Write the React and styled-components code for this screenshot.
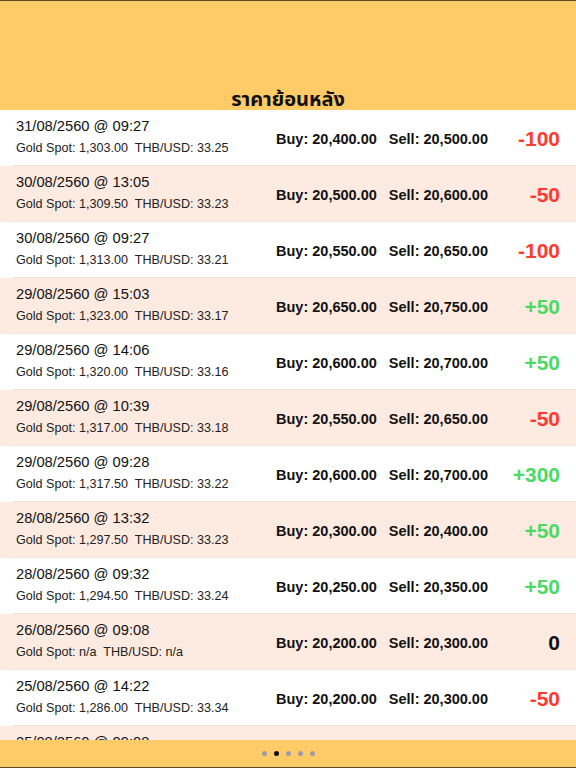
import React from 'react'
import styled, { createGlobalStyle } from 'styled-components'

const GlobalStyle = createGlobalStyle`
    html, body {
        margin: 0;
        padding: 0;
        background: #ffffff;
    }
    body {
        font-family: "Liberation Sans", Arial, sans-serif;
    }
`

const Screen = styled.div`
    width: 576px;
    height: 768px;
    display: flex;
    flex-direction: column;
    overflow: hidden;
    background: #ffffff;
`

const Header = styled.div`
    height: 109px;
    flex-shrink: 0;
    border-top: 1px solid #5b4a2c;
    background: #fecb66;
    display: flex;
    align-items: flex-end;
    justify-content: center;
`

const Title = styled.h1`
    margin: 0 0 -3px;
    font-family: "Noto Sans Thai", "Noto Sans", "DejaVu Sans", sans-serif;
    font-size: 20px;
    font-weight: bold;
    color: #111111;
    line-height: 26px;
`

const List = styled.div`
    flex: 1;
    overflow: hidden;
`

const Row = styled.div`
    position: relative;
    height: 56px;
    box-sizing: border-box;
    padding: 0 16px;
    display: grid;
    grid-template-columns: 1fr auto 72px;
    align-items: center;
    background: ${p => (p.$alt ? '#fdeae1' : '#ffffff')};

    &::after {
        content: '';
        position: absolute;
        left: 12px;
        right: 0;
        bottom: 0;
        height: 1px;
        background: #e8e4e2;
    }
`

const Info = styled.div`
    display: flex;
    flex-direction: column;
    gap: 5px;
    margin-top: -2px;
`

const Stamp = styled.div`
    font-size: 14.7px;
    color: #111111;
    line-height: 18px;
`

const Spot = styled.div`
    font-size: 12.6px;
    color: #222222;
    line-height: 17px;
    white-space: pre;
`

const Prices = styled.div`
    font-size: 14.5px;
    font-weight: bold;
    color: #111111;
    white-space: pre;
    margin-top: 2px;
`

const Change = styled.div`
    text-align: right;
    font-size: 21px;
    font-weight: bold;
    margin-top: 1px;
    color: ${p => (p.$value > 0 ? '#4cd964' : p.$value < 0 ? '#ff3b30' : '#111111')};
`

const Footer = styled.div`
    height: 27px;
    flex-shrink: 0;
    border-bottom: 1px solid #5b4a2c;
    background: #fecb66;
    display: flex;
    align-items: center;
    justify-content: center;
    gap: 7px;
`

const Dot = styled.span`
    width: 5px;
    height: 5px;
    border-radius: 50%;
    background: ${p => (p.$active ? '#111111' : '#9c9ca4')};
`

const history = [
    ['31/08/2560 @ 09:27', '1,303.00', '33.25', '20,400.00', '20,500.00', -100],
    ['30/08/2560 @ 13:05', '1,309.50', '33.23', '20,500.00', '20,600.00', -50],
    ['30/08/2560 @ 09:27', '1,313.00', '33.21', '20,550.00', '20,650.00', -100],
    ['29/08/2560 @ 15:03', '1,323.00', '33.17', '20,650.00', '20,750.00', 50],
    ['29/08/2560 @ 14:06', '1,320.00', '33.16', '20,600.00', '20,700.00', 50],
    ['29/08/2560 @ 10:39', '1,317.00', '33.18', '20,550.00', '20,650.00', -50],
    ['29/08/2560 @ 09:28', '1,317.50', '33.22', '20,600.00', '20,700.00', 300],
    ['28/08/2560 @ 13:32', '1,297.50', '33.23', '20,300.00', '20,400.00', 50],
    ['28/08/2560 @ 09:32', '1,294.50', '33.24', '20,250.00', '20,350.00', 50],
    ['26/08/2560 @ 09:08', 'n/a', 'n/a', '20,200.00', '20,300.00', 0],
    ['25/08/2560 @ 14:22', '1,286.00', '33.34', '20,200.00', '20,300.00', -50],
    ['25/08/2560 @ 09:08', '1,290.00', '33.35', '20,250.00', '20,350.00', 50],
]

const formatChange = v => (v > 0 ? '+' + v : String(v))

export default function App() {
    return (
        <React.Fragment>
            <GlobalStyle />
            <Screen>
                <Header>
                    <Title>ราคาย้อนหลัง</Title>
                </Header>
                <List>
                    {history.map(([stamp, spot, rate, buy, sell, change], i) => (
                        <Row key={stamp + i} $alt={i % 2 === 1}>
                            <Info>
                                <Stamp>{stamp}</Stamp>
                                <Spot>{'Gold Spot: ' + spot + '  THB/USD: ' + rate}</Spot>
                            </Info>
                            <Prices>{'Buy: ' + buy + '   Sell: ' + sell}</Prices>
                            <Change $value={change}>{formatChange(change)}</Change>
                        </Row>
                    ))}
                </List>
                <Footer>
                    {[0, 1, 2, 3, 4].map(i => (
                        <Dot key={i} $active={i === 1} />
                    ))}
                </Footer>
            </Screen>
        </React.Fragment>
    )
}
